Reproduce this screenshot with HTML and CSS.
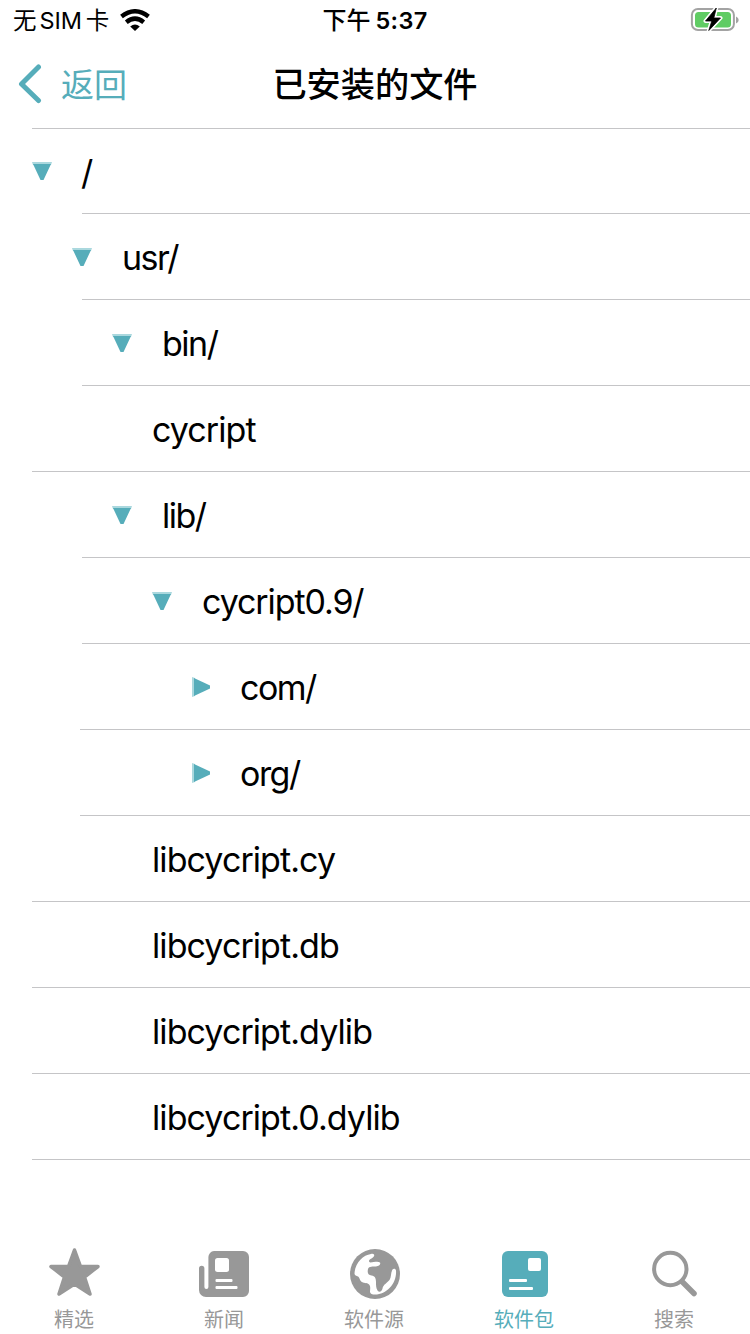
FILE: index.html
```html
<!DOCTYPE html>
<html lang="zh-CN">
<head>
<meta charset="utf-8">
<title>已安装的文件</title>
<link rel="stylesheet" href="styles.css">
</head>
<body>
<svg class="defs" aria-hidden="true">
  <symbol id="open" viewBox="0 0 20 18"><path fill="#aad8de" d="M0 0h20l-1 3H1z"/><path fill="#56adba" d="M1 2h18l-7.500 16h-3z"/></symbol>
  <symbol id="closed" viewBox="0 0 18 20"><path fill="#aad8de" d="M0 0l3 1v18l-3 1z"/><path fill="#56adba" d="M2 1l16 7.500v3L2 19z"/></symbol>
</svg>
<div class="status">
  <div class="carrier"><span class="carrier-name">无<span class="sim">SIM</span>卡</span>
    <svg class="wifi" viewBox="0 0 30 22"><g fill="none" stroke="#000" stroke-width="4.400"><path d="M1.500 7.500Q15-3 28.500 7.500"/><path d="M6.300 13.200Q15 6 23.700 13.200"/></g><path d="M10.200 17.500Q15 13.500 19.800 17.500L15 22z"/></svg>
  </div>
  <div class="clock">下午<span class="time">5:37</span></div>
  <svg class="battery" viewBox="0 0 50 26"><rect x="1.900" y="2" width="42" height="21" rx="6" fill="none" stroke="#a3a3a3" stroke-width="2"/><path d="M46 9.500q2.700 1 2.700 3.500T46 16.500z" fill="#a3a3a3"/><rect x="5" y="5" width="36" height="15.500" rx="3.500" fill="#60cc64"/><path d="M26.300 1L15.500 14h6.300l-3 9.500L30.500 11h-6.700z" stroke="#fff" stroke-width="4" stroke-linejoin="round"/><path d="M26.300 1L15.500 14h6.300l-3 9.500L30.500 11h-6.700z" stroke="#000" stroke-width=".8"/></svg>
</div>
<header class="nav">
  <div class="back"><svg class="chevron" viewBox="0 0 24 40"><path d="M20.500 3L3.500 20 20.500 36.500" fill="none" stroke="#56adba" stroke-width="5" stroke-linecap="round" stroke-linejoin="round"/></svg><span>返回</span></div>
  <h1 class="title">已安装的文件</h1>
</header>
<main class="tree">
  <div class="row first"><svg class="open d0"><use href="#open"/></svg><span>/</span></div>
  <div class="row"><svg class="open d1"><use href="#open"/></svg><span>usr/</span></div>
  <div class="row"><svg class="open d2"><use href="#open"/></svg><span>bin/</span></div>
  <div class="row file"><span>cycript</span></div>
  <div class="row"><svg class="open d2"><use href="#open"/></svg><span>lib/</span></div>
  <div class="row"><svg class="open d3"><use href="#open"/></svg><span class="long">cycript0.9/</span></div>
  <div class="row shut"><svg class="closed"><use href="#closed"/></svg><span>com/</span></div>
  <div class="row shut"><svg class="closed"><use href="#closed"/></svg><span>org/</span></div>
  <div class="row file"><span>libcycript.cy</span></div>
  <div class="row file"><span>libcycript.db</span></div>
  <div class="row file"><span>libcycript.dylib</span></div>
  <div class="row file"><span>libcycript.0.dylib</span></div>
</main>
<nav class="tabs">
  <div class="tab"><svg class="icon" viewBox="0 0 52 52"><path d="M26.500 3l6 16.500 17.500 0L36.500 30l5.500 17L26.500 37 11 47 16.500 30 3 19.500 20.500 19.500z" fill="#989898" stroke="#989898" stroke-width="3.500" stroke-linejoin="round"/></svg><span>精选</span></div>
  <div class="tab"><svg class="icon" viewBox="0 0 52 52"><path fill="#989898" d="M16 4h29a6 6 0 0 1 6 6v34a6 6 0 0 1-6 6H8a7 7 0 0 1-7-7V21.500a2.700 2.700 0 0 1 5.400 0V40a2 2 0 0 0 4 0V10a6 6 0 0 1 5.600-6z"/><g fill="#fff"><rect x="17" y="11" width="14" height="14" rx="2.500"/><rect x="17.500" y="32" width="17" height="3" rx="1"/><rect x="17.500" y="39" width="22" height="3" rx="1"/></g></svg><span>新闻</span></div>
  <div class="tab"><svg class="icon globe" viewBox="0 0 52 52"><circle cx="26" cy="27" r="25" fill="#989898"/><path fill="#fff" d="M25 7.500C26 9 24 11 21.500 12c-2 1-2 3 0 3.500 3 0 7-1.500 9.500 0 1 2-1 3.500-4 4-3 .2-7-.5-8 2.500-.8 4 0 6 3.500 6.500 3.500.3 4.500 3 4.500 6.500 0 3 0 6 1.500 8.500 2 2.500 4.500.5 5-2 .8-4 4.500-5.500 7-8.500 2-3 1-7 3-10.500 1-1.500 3.300-1 3.500 1C48 36 38 47.500 26 47.500c-2.500 0-5-.5-5-3 0-2 .8-4.500-.5-6.500-1.500-2.500-5-1.500-7.500-3-2.500-1.300-2-4-4-5.500-1.500-1-3.500-1-3.500-3C6 16 14 8 22 7c1-.3 2.500-.3 3 .5z"/></svg><span>软件源</span></div>
  <div class="tab active"><svg class="icon" viewBox="0 0 52 52"><rect x="4" y="4" width="46" height="46" rx="6" fill="#56adba"/><g fill="#fff"><rect x="30" y="11" width="13" height="13" rx="2"/><rect x="11" y="32" width="18" height="3" rx="1"/><rect x="11" y="40" width="24" height="3" rx="1"/></g></svg><span>软件包</span></div>
  <div class="tab"><svg class="icon" viewBox="0 0 52 52"><g fill="none" stroke="#989898"><circle cx="22.300" cy="22" r="16.200" stroke-width="4"/><path d="M34.500 35L46 46.500" stroke-width="5.500" stroke-linecap="round"/></g></svg><span>搜索</span></div>
</nav>
</body>
</html>
```
FILE: styles.css
```css
* { box-sizing: border-box; }
body {
  margin: 0;
  width: 750px;
  height: 1334px;
  background: #fff;
  color: #000;
  font-family: Inter, "Noto Sans CJK SC", sans-serif;
  display: flex;
  flex-direction: column;
  overflow: hidden;
}
svg { display: block; flex: none; }
.defs { width: 0; height: 0; position: absolute; }
.status {
  height: 40px;
  display: grid;
  grid-template-columns: 1fr auto 1fr;
  align-items: center;
  padding: 0 10px 0 13px;
  font-size: 24px;
  line-height: 40px;
  white-space: nowrap;
}
.carrier { display: flex; align-items: center; gap: 11px; }
.carrier-name { padding-top: 1px; height: 40px; font-size: 23.5px; }
.sim { margin: 0 4px 0 3px; letter-spacing: -0.1px; }
.wifi { width: 30px; height: 22px; }
.clock { padding: 1px 3px 0 0; height: 40px; font-weight: 500; }
.time { margin-left: 5px; font-weight: 600; font-size: 23.5px; letter-spacing: 0.3px; }
.battery { width: 50px; height: 26px; justify-self: end; }
.nav {
  height: 88px;
  display: grid;
  grid-template-columns: 1fr auto 1fr;
  align-items: center;
}
.back {
  display: flex;
  align-items: center;
  gap: 19px;
  padding-left: 18px;
  color: #56adba;
  font-size: 33px;
  line-height: 40px;
}
.back span { padding-top: 2px; }
.chevron { width: 24px; height: 40px; }
.title { margin: 0; padding-top: 2px; font-size: 34.2px; font-weight: 500; line-height: 40px; }
.tree { font-size: 34px; line-height: 40px; letter-spacing: -1.5px; }
.row {
  height: 86px;
  margin-left: 82px;
  border-bottom: 1px solid #c5c5c7;
  display: flex;
  align-items: center;
}
.row span { padding-top: 3px; }
.row .long { letter-spacing: -1.1px; }
.first { margin-left: 32px; border-top: 1px solid #c5c5c7; border-bottom: 0; padding-bottom: 2px; }
.first span { padding-top: 5px; margin-left: -1px; }
.first + .row { border-top: 1px solid #c5c5c7; height: 87px; margin-top: -1px; }
.open { width: 20px; height: 18px; margin-right: 30px; }
.d0 { margin-left: 0; }
.d1 { margin-left: -10px; }
.d2 { margin-left: 30px; }
.d3 { margin-left: 70px; }
.shut { margin-left: 80px; padding-left: 112px; }
.closed { width: 18px; height: 20px; margin-right: 30px; }
.file { margin-left: 32px; padding-left: 120px; letter-spacing: -0.92px; }
.tabs {
  margin: auto 0 0 -1px;
  height: 87px;
  display: grid;
  grid-template-columns: repeat(5, 150px);
  color: #989898;
  font-size: 20px;
  line-height: 24px;
}
.tab { display: flex; flex-direction: column; align-items: center; gap: 9px; }
.icon { width: 52px; height: 52px; }
.globe { margin-left: 2px; }
.active { color: #56adba; }
```
